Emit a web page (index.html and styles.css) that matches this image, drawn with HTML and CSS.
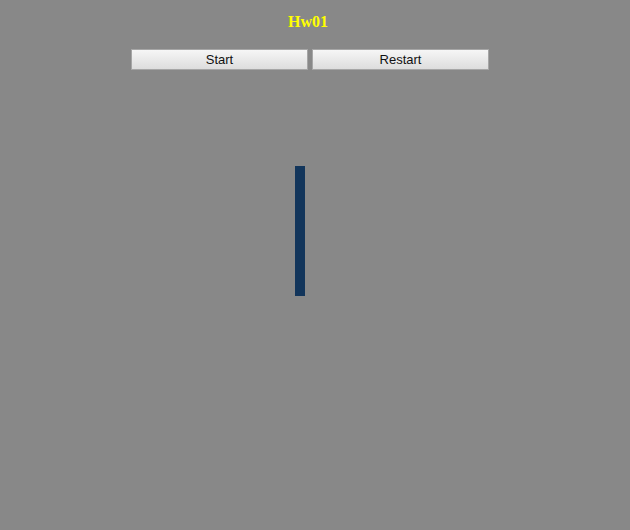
FILE: index.html
```
<!DOCTYPE html>
<html lang="en">
<head>
<meta charset="utf-8">
<title>Hw01</title>
<link rel="stylesheet" href="styles.css">
</head>
<body>
<main class="page">
<h1 class="title">Hw01</h1>
<div class="controls">
<button class="control" type="button">Start</button>
<button class="control" type="button">Restart</button>
</div>
<div class="stage">
<div class="bar"></div>
</div>
</main>
</body>
</html>
```

FILE: styles.css
```
body {
  margin: 0;
  background: #888888;
}

.page {
  display: flex;
  flex-direction: column;
  align-items: center;
  padding: 13px 10px 0 0;
}

.title {
  margin: 0 4px 0 0;
  color: #ffff00;
  font: bold 16px/18px "Liberation Serif", "Times New Roman", serif;
}

.controls {
  display: flex;
  gap: 4px;
  margin: 18px 0 0;
}

.control {
  box-sizing: border-box;
  width: 177px;
  height: 21px;
  padding: 0;
  border: 1px solid #a6a6a6;
  border-radius: 0;
  background: linear-gradient(#f6f6f6, #dddddd);
  color: #111111;
  font: 13px/15px "Liberation Sans", Arial, sans-serif;
}

.stage {
  display: flex;
  justify-content: center;
  width: 100%;
  padding: 96px 20px 0 0;
  box-sizing: border-box;
}

.bar {
  width: 10px;
  height: 130px;
  background: #12355b;
}
```
